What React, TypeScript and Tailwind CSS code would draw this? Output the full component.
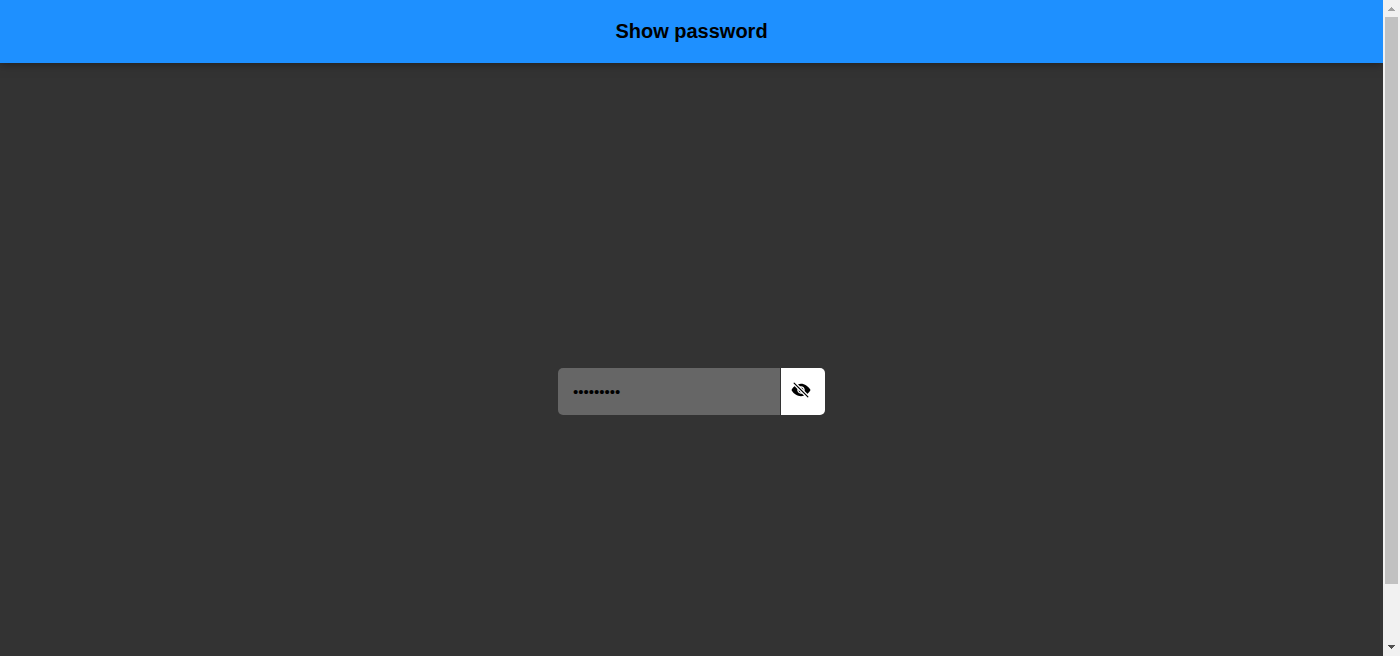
import { useState } from "react";
import { IoEye, IoEyeOff } from "react-icons/io5";

function Scrollbar() {
  return (
    <div aria-hidden="true" className="flex w-[17px] shrink-0 flex-col items-center bg-[#f1f1f1]">
      <svg className="h-[17px] w-[17px] shrink-0" viewBox="0 0 17 17" shapeRendering="crispEdges" fill="#a3a3a3">
        <path d="M8 7h1v1h1v1h1v1h1v1H5v-1h1V9h1V8h1z" />
      </svg>
      <div className="grid w-[13px] flex-1 grid-rows-[656fr_63fr]">
        <div className="bg-[#c1c1c1]" />
      </div>
      <svg className="h-[17px] w-[17px] shrink-0" viewBox="0 0 17 17" shapeRendering="crispEdges" fill="#505050">
        <path d="M5 6h7v1h-1v1h-1v1H9v1H8V9H7V8H6V7H5z" />
      </svg>
    </div>
  );
}

export default function App() {
  const [visible, setVisible] = useState(false);
  const [password, setPassword] = useState("password1");

  return (
    <div className="flex h-screen overflow-hidden bg-[#333333] font-['Liberation_Sans',Arial,sans-serif] text-black">
      <div className="min-w-0 flex-1 overflow-y-auto [scrollbar-width:none]">
        <header className="relative bg-[#1e90ff] p-5 text-center shadow-[0_0_10px_rgba(0,0,0,0.5)]">
          <h1 className="text-[20px] leading-[23px] font-bold">Show password</h1>
        </header>
        <main className="flex min-h-screen items-center justify-center">
          <form className="flex gap-px" onSubmit={(event) => event.preventDefault()}>
            <input
              type={visible ? "text" : "password"}
              aria-label="Password"
              value={password}
              onChange={(event) => setPassword(event.target.value)}
              className="h-[47px] w-[222px] rounded-l-[5px] bg-[#666666] px-[15px] text-[15px] outline-none"
            />
            <button
              type="button"
              aria-label={visible ? "Hide password" : "Show password"}
              onClick={() => setVisible(!visible)}
              className="flex h-[47px] w-11 items-center rounded-r-[5px] bg-white px-[10px] pb-[3px]"
            >
              {visible ? <IoEye className="size-5 shrink-0" /> : <IoEyeOff className="size-5 shrink-0" />}
            </button>
          </form>
        </main>
      </div>
      <Scrollbar />
    </div>
  );
}
